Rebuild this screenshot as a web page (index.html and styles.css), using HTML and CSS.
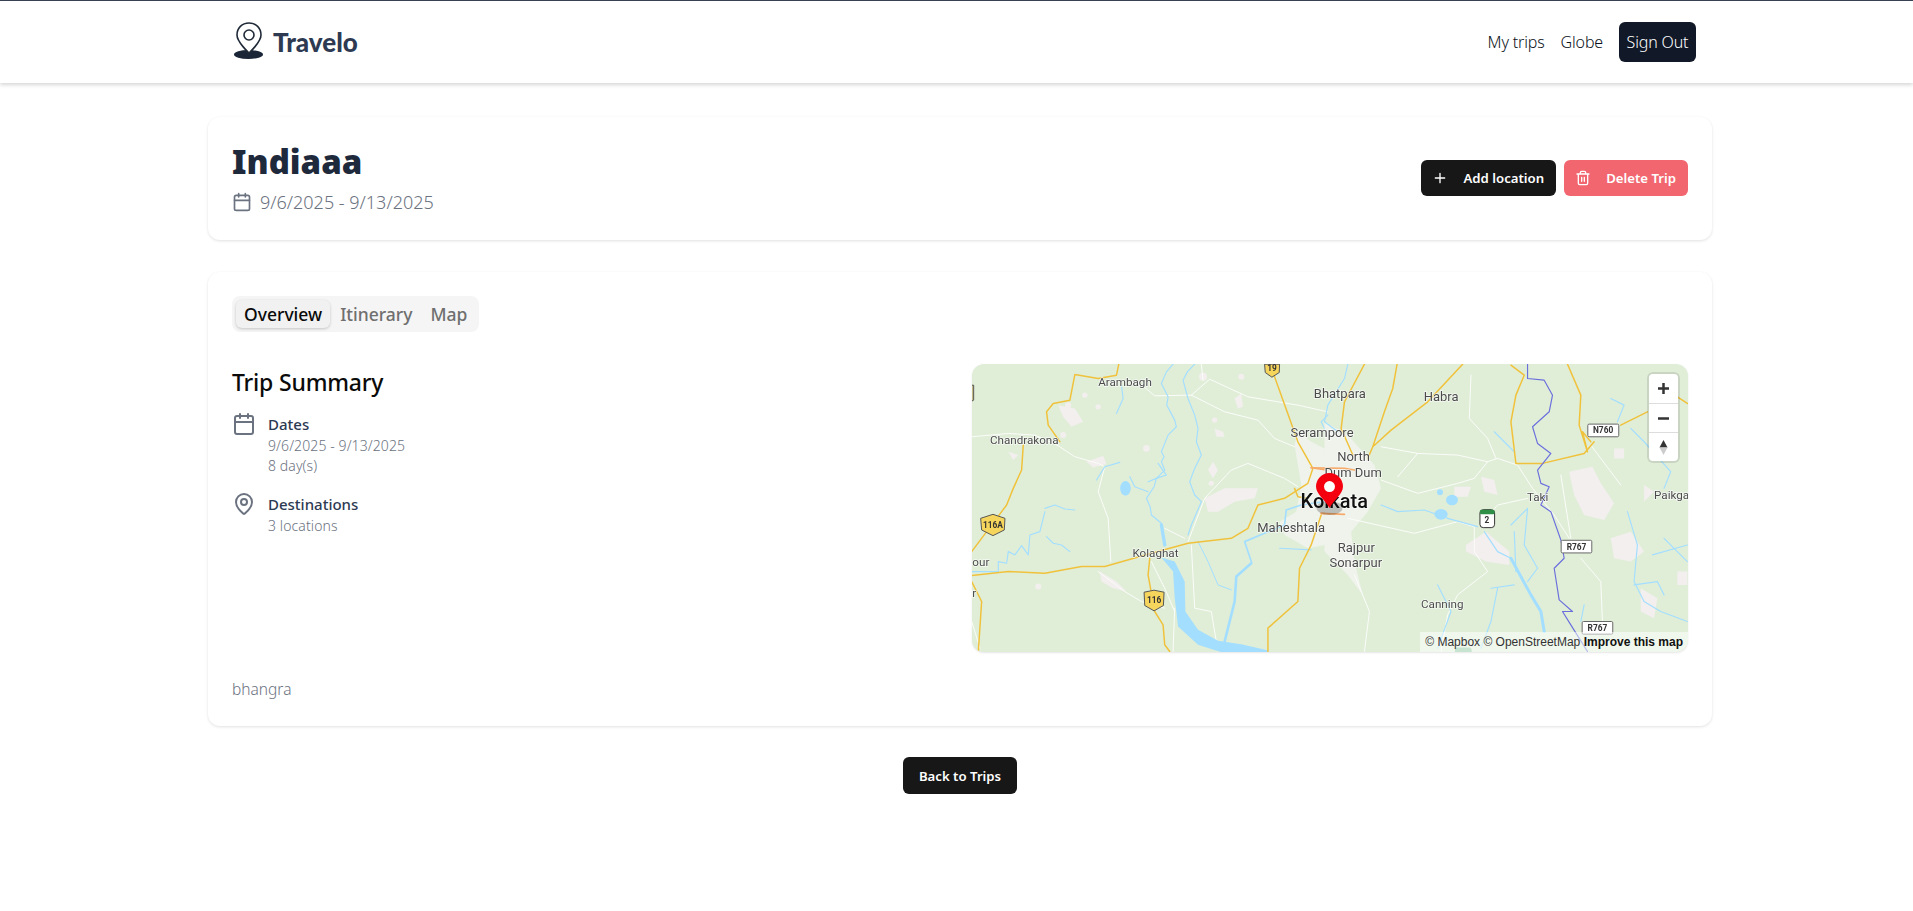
FILE: index.html
```html
<!DOCTYPE html>
<html lang="en">
<head>
    <meta charset="UTF-8">
    <title>Travelo</title>
    <link rel="stylesheet" href="styles.css">
</head>
<body>
    <header class="navbar">
        <div class="navbar-inner">
            <a class="brand">
                <svg class="brand-icon" viewBox="0 0 48 48">
                    <ellipse cx="24.5" cy="36.5" rx="14.5" ry="4.5" fill="#1a2638"/>
                    <path d="M25 5C18 5 13 10 13 17C13 24 25 35 25 35C25 35 37 24 37 17C37 10 32 5 25 5Z" fill="#fff" stroke="#1f2937" stroke-width="1.6"/>
                    <circle cx="25" cy="17" r="5" fill="none" stroke="#1f2937" stroke-width="1.6"/>
                </svg>
                <span>Travelo</span>
            </a>
            <nav class="nav-links">
                <a>My trips</a>
                <a>Globe</a>
                <button class="sign-out">Sign Out</button>
            </nav>
        </div>
    </header>

    <main class="container">
        <section class="card trip-head">
            <div>
                <h1>Indiaaa</h1>
                <div class="trip-dates">
                    <svg class="icon-sm" viewBox="0 0 24 24"><path d="M8 2v4M16 2v4"/><rect x="3" y="4" width="18" height="18" rx="2"/><path d="M3 10h18"/></svg>
                    9/6/2025 - 9/13/2025
                </div>
            </div>
            <div class="trip-actions">
                <button class="btn btn-dark">
                    <svg class="btn-icon" viewBox="0 0 24 24"><path d="M5 12h14M12 5v14"/></svg>
                    Add location
                </button>
                <button class="btn btn-danger">
                    <svg class="btn-icon" viewBox="0 0 24 24"><path d="M3 6h18M19 6v14a2 2 0 0 1-2 2H7a2 2 0 0 1-2-2V6M8 6V4a2 2 0 0 1 2-2h4a2 2 0 0 1 2 2v2M10 11v6M14 11v6"/></svg>
                    Delete Trip
                </button>
            </div>
        </section>

        <section class="card trip-body">
            <div class="tabs">
                <button class="tab active">Overview</button>
                <button class="tab">Itinerary</button>
                <button class="tab">Map</button>
            </div>

            <div class="overview-grid">
                <div>
                    <h2>Trip Summary</h2>
                    <div class="summary-item">
                        <svg class="icon-md" viewBox="0 0 24 24"><path d="M8 2v4M16 2v4"/><rect x="3" y="4" width="18" height="18" rx="2"/><path d="M3 10h18"/></svg>
                        <div>
                            <div class="summary-label">Dates</div>
                            <div class="summary-text">9/6/2025 - 9/13/2025</div>
                            <div class="summary-text">8 day(s)</div>
                        </div>
                    </div>
                    <div class="summary-item">
                        <svg class="icon-md" viewBox="0 0 24 24"><path d="M20 10c0 5-5.500 10.200-7.400 11.800a1 1 0 0 1-1.200 0C9.500 20.200 4 15 4 10a8 8 0 0 1 16 0"/><circle cx="12" cy="10" r="3"/></svg>
                        <div>
                            <div class="summary-label">Destinations</div>
                            <div class="summary-text">3 locations</div>
                        </div>
                    </div>
                </div>

                <div class="map">
                    <svg class="map-canvas" viewBox="0 0 717 290">
                        <!-- west half, drawn in crop units (3 = 1px) -->
                        <g transform="translate(-7 -9) scale(.33333)" fill="none" stroke-linecap="round" stroke-linejoin="round">
                            <g fill="#f2efee" stroke="none">
                                <path d="M280 150l50 10 25 40-35 15-25-30zM365 320l50-18 10 25-40 10zM720 430l60-30 100 0-10 30-60 10-50 30-30 0zM405 650l50 30 30 30-40-10-35-20zM745 320l15 25-15 25-15-25zM810 130l20-15 5 40-15 5zM750 220l25 10 5 15-25 0zM130 290l30 10-15 15z"/>
                                <circle cx="310" cy="150" r="9"/><circle cx="360" cy="120" r="8"/><circle cx="400" cy="155" r="8"/><circle cx="830" cy="65" r="9"/><circle cx="715" cy="65" r="12"/><circle cx="750" cy="195" r="8"/><circle cx="545" cy="280" r="10"/><circle cx="295" cy="240" r="9"/><circle cx="220" cy="695" r="9"/><circle cx="740" cy="385" r="8"/>
                                <path d="M1000 230l40 30 40 20 0 60 0 230-50 10-70-40-15-40 50-30 15-80-10-60-10-60z" fill="#f5f5f3" fill-opacity=".7"/>
                            </g>
                            <g stroke="#fbfcf9" stroke-width="3">
                                <path d="M20 245L130 235 210 240 280 272 330 305 400 325 420 335 400 410 430 490 438 620"/>
                                <path d="M520 80L570 122 680 120 735 72 850 125 1000 150 1090 170M680 120L780 170 880 195 930 250 990 275"/>
                                <path d="M400 650L480 710 530 740 600 760M660 550L600 520M670 560L720 430 800 345 850 325 960 370 1000 395"/>
                                <path d="M680 570L690 760 740 770 755 860M630 760L625 890M560 620L600 700 630 770M20 800L45 880M710 27L715 75"/>
                            </g>
                            <g stroke="#a3deff" stroke-width="3.500">
                                <path d="M625 27L605 50 590 85 610 125 606 150 630 195 635 215 610 240 590 290 598 305 590 320 600 345 575 370 568 395 545 430 556 455 560 480 590 505 600 570"/>
                                <path d="M690 27L668 50 655 75 670 130 690 180 700 220 695 260 710 300 690 340 675 380 690 420 710 440 680 510 670 540"/>
                                <path d="M240 460L270 450 300 462 330 465M240 470L225 530 195 540 190 600 170 572 150 600 130 590 125 625 100 620 100 650 20 650M245 545L265 565 290 570 315 590"/>
                                <path d="M470 90L475 130 455 175M420 335L465 322M420 335L395 375M495 365L510 395 550 410M580 325L605 360 575 370 550 380"/>
                                <path d="M700 560L730 620 760 690 800 705" stroke-width="3"/>
                                <path d="M860 620L840 560 900 535 960 510 965 465 1010 450 1080 440" stroke-width="5"/>
                                <path d="M860 625L815 665 810 740 780 860" stroke-width="8"/>
                                <path d="M1090 180L1070 200 1085 230"/>
                                <path d="M590 510L600 570" stroke-width="10"/>
                                <path d="M945 580L1040 585"/>
                            </g>
                            <path d="M590 608L630 620 660 680 662 770 700 825 760 858 830 868 915 888 900 895 780 895 700 870 640 815 630 730 625 650z" fill="#a3deff"/>
                            <ellipse cx="482" cy="400" rx="16" ry="22" fill="#a3deff"/>
                            <g stroke="#f0c23c" stroke-width="4.500">
                                <path d="M20 662L130 650 240 655 350 635 420 635 560 595 670 565 800 550 850 520 880 450 960 430 1030 385 1045 340 1000 260 930 65 920 30"/>
                                <path d="M330 58L400 70 455 60 462 27M330 58L315 135 265 145 245 170 250 210 285 260"/>
                                <path d="M175 270L170 345 145 400 125 450 20 590M20 680L50 740 40 890"/>
                                <path d="M555 610L550 660 570 770 595 810 600 870 615 890M1070 480L1040 570 1005 640 1000 740 910 820 910 890"/>
                                <path d="M990 400L1000 425 1030 430"/>
                            </g>
                            <path d="M1040 338L1090 345M1070 475L1110 478" stroke="#f6ab6c" stroke-width="5"/>
                        </g>

                        <!-- east half -->
                        <g transform="translate(353 -9) scale(.33333)" fill="none" stroke-linecap="round" stroke-linejoin="round">
                            <g fill="#f2efee" stroke="none">
                                <path d="M735 350l70-15 25 50 40 60-30 50-60-15-30-60zM860 550l60-20 40 60-40 30-50-10zM425 570l60-40 70 60 0 40-70-10-60-30zM470 365l40 10 10 45-40-10zM950 700l50 30-10 60-40-20zM390 395l50 0-10 30-40 0zM960 390l30 20-30 30zM870 280l30 0 0 30-30 0zM1060 650l30 0 0 40-30 0z"/>
                                <path d="M0 200L70 240 150 330 170 400 130 470 80 530 90 620 115 720 70 660 0 590z" fill="#f5f5f3" fill-opacity=".7"/>
                            </g>
                            <g stroke="#fbfcf9" stroke-width="3">
                                <path d="M170 275L280 295 400 300 490 320 520 310 580 330 625 400 690 480 735 550"/>
                                <path d="M490 320L450 370 400 385 280 415 170 375M280 295L220 365M440 60L435 190 490 250 515 310"/>
                                <path d="M70 490L270 535 400 500 450 515 450 590 490 650 400 720 370 780 350 890"/>
                                <path d="M610 430L520 450 470 510M90 660L135 770 120 890M770 610L830 680 835 800M710 360L740 550M800 270L890 390"/>
                            </g>
                            <g stroke="#a3deff" stroke-width="3.500">
                                <path d="M70 27L60 70 10 150 0 200 40 230M370 490L460 515M480 530L520 590 560 610"/>
                                <path d="M170 450L220 470 300 465 370 490M560 510L610 460M570 530L575 650M610 460L600 570 640 640 610 680"/>
                                <path d="M910 470L940 570 930 680 960 740 1010 770 1090 800M985 600L1090 570M1020 550L1090 620"/>
                                <path d="M340 690L380 770 340 880M500 700L570 690M510 230L570 290M860 130L900 150 880 200"/>
                                <path d="M930 690L1000 680 1020 720"/>
                                <path d="M920 220L960 260 1040 350 1020 400"/>
                                <path d="M560 610L620 720 650 770 660 830" stroke-width="9"/>
                                <path d="M520 700L500 800 470 880M780 750L770 800"/>
                            </g>
                            <ellipse cx="350" cy="478" rx="20" ry="16" fill="#a3deff"/>
                            <ellipse cx="383" cy="435" rx="18" ry="16" fill="#a3deff"/>
                            <circle cx="347" cy="412" r="9" fill="#a3deff"/>
                            <g stroke="#f0c23c" stroke-width="4.500">
                                <path d="M120 27L60 140 50 220 85 300M218 27L205 100 180 170 145 275 130 310M415 27L310 140 200 225 145 275"/>
                                <path d="M560 30L600 60 575 120 560 200 575 325 655 325 780 295 810 260M730 27L770 120 765 210 790 290 775 230 800 260M890 210L970 170M1060 125L1090 145"/>
                            </g>
                            <path d="M610 27L610 70 660 75 685 120 675 170 625 215 640 265 680 295 640 345 650 385 675 395 650 450 680 470 710 555 720 610 690 640 705 735 745 770 715 770 740 810 790 890" stroke="#6a6fdc" stroke-width="3.500"/>
                            <path d="M-40 338L60 340 90 345M-10 475L60 478" stroke="#f6ab6c" stroke-width="5"/>
                            <rect x="392" y="878" width="50" height="20" rx="8" fill="#8ec9a0"/>
                        </g>

                        <!-- labels and shields -->
                        <g class="map-labels" transform="translate(-7 -9) scale(.33333)">
                            <text x="400" y="92">Arambagh</text>
                            <text x="75" y="267">Chandrakona</text>
                            <text x="503" y="606">Kolaghat</text>
                            <text x="22" y="632">our</text>
                            <text x="22" y="726">r</text>
                            <text class="label-lg" x="878" y="530">Maheshtala</text>
                            <text class="label-lg" x="1048" y="130">Bhatpara</text>
                            <text class="label-lg" x="978" y="245">Serampore</text>
                            <text class="label-lg" x="1378" y="138">Habra</text>
                            <text class="label-lg" x="1118" y="318">North</text>
                            <text class="label-lg" x="1080" y="365">Dum Dum</text>
                            <text class="label-lg" x="1120" y="590">Rajpur</text>
                            <text class="label-lg" x="1095" y="636">Sonarpur</text>
                            <text x="1370" y="758">Canning</text>
                            <text x="1688" y="437">Taki</text>
                            <text x="2070" y="432">Paikga</text>
                            <text class="label-city" x="1008" y="458">Kolkata</text>
                        </g>
                        <g class="map-shields" transform="translate(-7 -9) scale(.33333)">
                            <path d="M47 490L84 478 120 490 118 525 84 542 50 525Z" fill="#f6d55c" stroke="#555" stroke-width="3"/>
                            <text x="84" y="519">116A</text>
                            <path d="M538 712L568 706 598 712 596 752 568 768 540 752Z" fill="#f6d55c" stroke="#555" stroke-width="3"/>
                            <text x="568" y="745">116</text>
                            <path d="M900 27L945 27 944 52 922 66 902 52Z" fill="#f6d55c" stroke="#555" stroke-width="3"/>
                            <text x="922" y="48">19</text>
                            <path d="M20 90L26 90 26 135 20 138Z" fill="#d8cf8c" stroke="#555" stroke-width="3"/>
                            <rect x="1547" y="464" width="44" height="54" rx="10" fill="#fff" stroke="#333" stroke-width="3"/>
                            <rect x="1547" y="464" width="44" height="14" rx="5" fill="#2f8f46"/>
                            <text x="1568" y="504">2</text>
                            <rect x="1871" y="207" width="93" height="38" rx="4" fill="#fff" stroke="#666" stroke-width="3"/>
                            <text x="1917" y="235">N760</text>
                            <rect x="1791" y="556" width="92" height="38" rx="4" fill="#fff" stroke="#666" stroke-width="3"/>
                            <text x="1837" y="584">R767</text>
                            <rect x="1854" y="800" width="92" height="38" rx="4" fill="#fff" stroke="#666" stroke-width="3"/>
                            <text x="1900" y="828">R767</text>
                        </g>

                        <!-- marker -->
                        <ellipse cx="358" cy="144" rx="13" ry="7" fill="#000" opacity=".22"/>
                        <path d="M358 144C353 135 344.500 130 344.500 122.500A13.500 13.500 0 0 1 371.500 122.500C371.500 130 363 135 358 144Z" fill="#f4000f"/>
                        <circle cx="358" cy="122.500" r="5.500" fill="#fff"/>
                    </svg>

                    <div class="map-controls">
                        <button class="map-ctrl"><svg viewBox="0 0 29 29"><path d="M14.500 9v11M9 14.500h11"/></svg></button>
                        <button class="map-ctrl"><svg viewBox="0 0 29 29"><path d="M9 14.500h11"/></svg></button>
                        <button class="map-ctrl"><svg viewBox="0 0 29 29"><path class="needle-up" d="M14.500 7L18.500 14.500H10.500Z"/><path class="needle-down" d="M14.500 22L18.500 14.500H10.500Z"/></svg></button>
                    </div>
                    <div class="map-attrib">© Mapbox © OpenStreetMap <strong>Improve this map</strong></div>
                </div>
            </div>

            <p class="trip-desc">bhangra</p>
        </section>

        <div class="back-row">
            <button class="btn btn-dark btn-back">Back to Trips</button>
        </div>
    </main>
</body>
</html>
```

FILE: styles.css
```css
* {
    box-sizing: border-box;
}

body {
    margin: 0;
    min-height: 911px;
    background: #fff;
    color: #0b1220;
    font-family: "Noto Sans", "Open Sans", sans-serif;
    overflow: hidden;
}

button {
    font-family: inherit;
    border: none;
    cursor: pointer;
}

.navbar {
    height: 83px;
    border-top: 1px solid #374151;
    background: #fff;
    box-shadow: 0 2px 4px rgba(0,0,0,0.16);
}

.navbar-inner,
.container {
    width: 1504px;
    margin-left: 208px;
}

.navbar-inner {
    height: 100%;
    padding: 0 16px;
    display: flex;
    align-items: center;
    justify-content: space-between;
}

.brand {
    display: flex;
    align-items: center;
    gap: 1px;
    font-family: Lato, "Noto Sans", sans-serif;
    font-size: 26px;
    font-weight: 900;
    color: #2d3a52;
}

.brand-icon {
    width: 48px;
    height: 48px;
}

.nav-links {
    display: flex;
    align-items: center;
    gap: 16px;
    font-size: 16px;
    font-weight: 300;
    letter-spacing: -0.15px;
}

.sign-out {
    height: 40px;
    width: 77px;
    padding: 0;
    background: #111827;
    color: #fff;
    border-radius: 6px;
    font-size: 16px;
    font-weight: 300;
    letter-spacing: -0.15px;
}

.card {
    background: #fff;
    border-radius: 12px;
    padding: 24px;
    box-shadow: 0 1px 3px rgba(0,0,0,0.12);
}

.trip-head {
    margin-top: 34px;
    height: 123px;
    display: flex;
    align-items: center;
    justify-content: space-between;
}

.trip-head h1 {
    margin: -3px 0 0;
    font-size: 33px;
    line-height: 44px;
    font-weight: 900;
    color: #1e293b;
}

.trip-dates {
    margin-top: 6px;
    display: flex;
    align-items: center;
    gap: 8px;
    font-size: 18px;
    font-weight: 300;
    color: #6b7280;
}

.icon-sm,
.icon-md,
.btn-icon {
    fill: none;
    stroke: currentColor;
    stroke-width: 2;
    stroke-linecap: round;
    stroke-linejoin: round;
    flex-shrink: 0;
}

.icon-sm {
    width: 20px;
    height: 20px;
}

.icon-md {
    width: 24px;
    height: 24px;
    color: #6b7280;
}

.trip-actions {
    display: flex;
    gap: 8px;
    margin-top: -2px;
}

.btn {
    height: 36px;
    padding: 0 12px 0 11px;
    display: flex;
    align-items: center;
    border-radius: 6px;
    color: #fff;
    font-size: 13.2px;
    font-weight: 600;
}

.btn-icon {
    width: 16px;
    height: 16px;
    margin-right: 15px;
}

.btn-dark {
    background: #171717;
}

.btn-danger {
    background: #f26670;
}

.trip-body {
    margin-top: 32px;
    height: 454px;
}

.tabs {
    display: inline-flex;
    gap: 2px;
    height: 36px;
    padding: 4px;
    background: #f5f5f5;
    border-radius: 8px;
}

.tab {
    padding: 0 8px;
    background: transparent;
    border-radius: 6px;
    color: #6f6f6f;
    font-size: 17.5px;
    font-weight: 500;
}

.tab.active {
    background: #f1f1f1;
    color: #0a0a0a;
    box-shadow: 0 1px 3px rgba(0,0,0,0.2);
}

.overview-grid {
    margin-top: 32px;
    display: grid;
    grid-template-columns: 1fr 1fr;
    gap: 24px;
}

h2 {
    margin: 0 0 12px;
    font-size: 23px;
    line-height: 36px;
    font-weight: 500;
    letter-spacing: -0.2px;
    color: #0a0a0a;
}

.summary-item {
    display: flex;
    gap: 12px;
    margin-bottom: 16px;
}

.summary-label {
    font-size: 15px;
    line-height: 24px;
    font-weight: 500;
    color: #2d3a52;
}

.summary-text {
    font-size: 14px;
    line-height: 20px;
    font-weight: 300;
    letter-spacing: 0.1px;
    color: #6b7280;
}

.map {
    position: relative;
    height: 288px;
    border-radius: 12px;
    overflow: hidden;
    background: #e0eed8;
    box-shadow: 0 1px 2px rgba(0,0,0,0.1);
}

.map-canvas {
    display: block;
    width: 100%;
    height: 290px;
    filter: blur(0.35px);
}

.map-labels text {
    font-family: Roboto, "Noto Sans", sans-serif;
    font-size: 35px;
    fill: #4a4a4a;
    stroke: rgba(255,255,255,0.75);
    stroke-width: 4px;
    paint-order: stroke;
}

.map-labels .label-lg {
    font-size: 39px;
}

.map-labels .label-city {
    font-size: 60px;
    font-weight: 500;
    fill: #111;
}

.map-shields text {
    font-family: Roboto, "Noto Sans", sans-serif;
    font-size: 25px;
    font-weight: 700;
    fill: #333;
    text-anchor: middle;
}

.map-controls {
    position: absolute;
    top: 10px;
    right: 10px;
    width: 29px;
    display: flex;
    flex-direction: column;
    background: #fff;
    border-radius: 4px;
    box-shadow: 0 0 0 2px rgba(0,0,0,0.1);
}

.map-ctrl {
    height: 29px;
    padding: 0;
    background: transparent;
    border-top: 1px solid #ddd;
}

.map-ctrl:first-child {
    border-top: none;
}

.map-ctrl svg {
    display: block;
    width: 29px;
    height: 29px;
    stroke: #333;
    stroke-width: 2.500;
}

.needle-up {
    fill: #333;
    stroke: none;
}

.needle-down {
    fill: #ccc;
    stroke: none;
}

.map-attrib {
    position: absolute;
    right: 0;
    bottom: 0;
    height: 20px;
    padding: 0 5px;
    background: rgba(255,255,255,0.5);
    font-family: "Liberation Sans", Arial, sans-serif;
    font-size: 12px;
    line-height: 20px;
    color: #333;
}

.map-attrib strong {
    color: #111;
}

.trip-desc {
    margin: 25px 0 0;
    font-size: 15.5px;
    line-height: 24px;
    font-weight: 300;
    color: #6b7280;
}

.back-row {
    margin-top: 31px;
    display: flex;
    justify-content: center;
}

.btn-back {
    height: 37px;
    padding: 0 16px;
}
```
